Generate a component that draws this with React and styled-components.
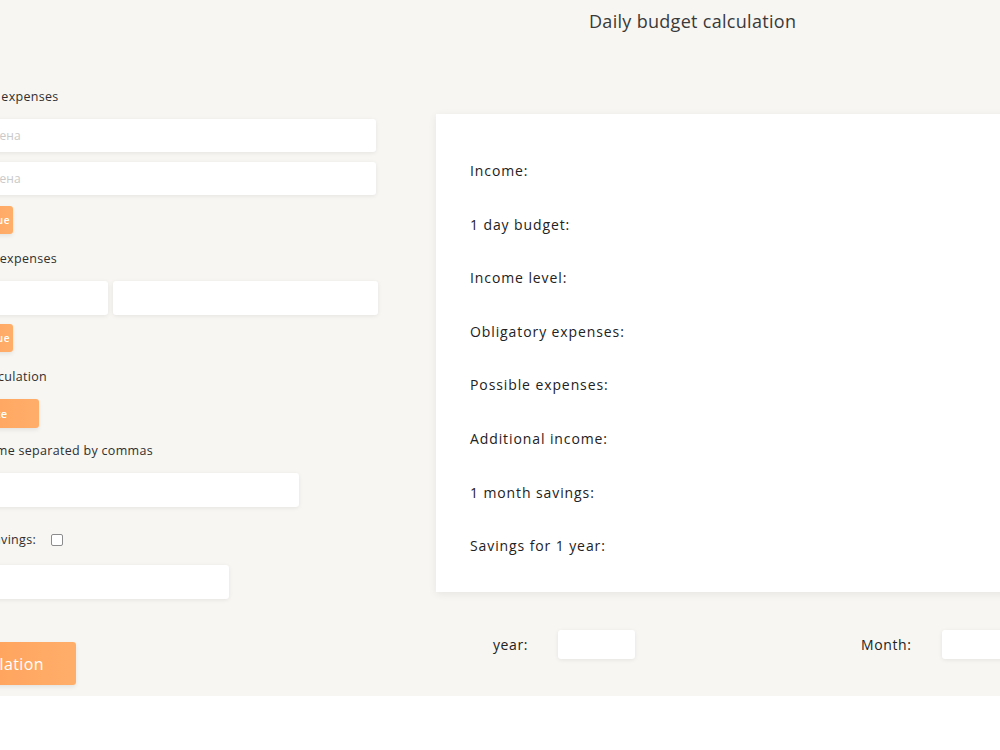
import React from "react";
import styled, { createGlobalStyle } from "styled-components";

const GlobalStyle = createGlobalStyle`
   html, body {
      margin: 0;
      padding: 0;
      background: #ffffff;
      overflow-x: hidden;
   }
   body {
      font-family: "Open Sans", "Liberation Sans", sans-serif;
      color: #333;
   }
`;

const Page = styled.div`
   background: #f7f6f3;
   width: 1180px;
   margin-left: -66px;
   padding: 9px 0 11px;
`;

const Header = styled.h1`
   margin: 0 0 56px;
   padding-left: 655px;
   font-size: 18px;
   font-weight: 400;
   line-height: 24px;
   color: #3a3a3a;
   letter-spacing: 0.3px;
`;

const Main = styled.div`
   display: flex;
   align-items: flex-start;
   gap: 58px;
`;

const LeftColumn = styled.div`
   width: 444px;
   display: flex;
   flex-direction: column;
`;

const Label = styled.div`
   font-size: 12.5px;
   line-height: 16px;
   color: #2f2f2f;
   letter-spacing: 0.3px;
   margin-top: ${(p) => p.$top || 0}px;
   margin-bottom: ${(p) => p.$bottom || 14}px;
   display: flex;
   align-items: center;
`;

const Input = styled.input`
   box-sizing: border-box;
   width: ${(p) => p.$width || 442}px;
   height: ${(p) => p.$height || 33}px;
   border: none;
   border-radius: 3px;
   background: #fff;
   box-shadow: 0 1px 4px rgba(0, 0, 0, 0.08);
   padding: 0 12px 0 ${(p) => p.$indent || 17}px;
   font-family: inherit;
   font-size: 12px;
   color: #333;
   outline: none;
   &::placeholder {
      color: #c9c9c9;
   }
`;

const Stack = styled.div`
   display: flex;
   flex-direction: column;
   gap: 10px;
`;

const Pair = styled.div`
   display: flex;
   gap: 5px;
`;

const OrangeButton = styled.button`
   box-sizing: border-box;
   border: none;
   border-radius: 3px;
   background: linear-gradient(90deg, #ff9d57, #ffae6a);
   color: #fff;
   font-family: inherit;
   box-shadow: 0 2px 4px rgba(0, 0, 0, 0.08);
   cursor: pointer;
   align-self: flex-start;
`;

const SmallButton = styled(OrangeButton)`
   width: 79px;
   height: 28px;
   margin-top: ${(p) => p.$top || 11}px;
   padding: 0 3px 0 0;
   font-size: 10px;
   font-weight: 600;
   text-align: right;
   letter-spacing: 0.5px;
`;

const MidButton = styled(OrangeButton)`
   height: 29px;
   padding: 0 32px 0 24px;
   font-size: 11px;
   font-weight: 600;
`;

const BigButton = styled(OrangeButton)`
   height: 43px;
   margin-top: 43px;
   padding: 0 32px 0 23px;
   font-size: 16px;
   letter-spacing: 0.4px;
`;

const Checkbox = styled.span`
   display: inline-block;
   width: 10px;
   height: 10px;
   border: 1px solid #8c8c8c;
   border-radius: 2px;
   background: #fff;
   margin-left: 15px;
`;

const RightColumn = styled.div`
   display: flex;
   flex-direction: column;
   padding-top: 25px;
`;

const Card = styled.div`
   box-sizing: border-box;
   width: 640px;
   height: 478px;
   background: #fff;
   box-shadow: 0 2px 8px rgba(0, 0, 0, 0.07);
   padding: 47px 34px 0;
   display: grid;
   grid-template-columns: 240px 1fr;
   grid-auto-rows: 20px;
   row-gap: 33.6px;
`;

const ResultLabel = styled.div`
   font-size: 14px;
   line-height: 20px;
   color: #222;
   letter-spacing: 0.9px;
`;

const ResultValue = styled.div`
   font-size: 14px;
   line-height: 20px;
   color: #222;
`;

const PeriodRow = styled.div`
   display: flex;
   align-items: center;
   margin-top: 38px;
   padding-left: 57px;
`;

const PeriodLabel = styled.span`
   font-size: 14px;
   color: #222;
   letter-spacing: 0.6px;
   margin-right: ${(p) => p.$gap}px;
   margin-left: ${(p) => p.$left || 0}px;
`;

const PeriodInput = styled(Input)`
   width: 77px;
   height: 29px;
`;

const results = [
   "Income:",
   "1 day budget:",
   "Income level:",
   "Obligatory expenses:",
   "Possible expenses:",
   "Additional income:",
   "1 month savings:",
   "Savings for 1 year:",
];

export default function App() {
   return (
      <>
         <GlobalStyle />
         <Page>
            <Header>Daily budget calculation</Header>
            <Main>
               <LeftColumn>
                  <Label>Obligatory expenses</Label>
                  <Stack>
                     <Input $indent={5} placeholder="Статья и цена" />
                     <Input $indent={5} placeholder="Статья и цена" />
                  </Stack>
                  <SmallButton>Add value</SmallButton>

                  <Label $top={17}>Additional expenses</Label>
                  <Pair>
                     <Input $width={174} $height={34} />
                     <Input $width={265} $height={34} />
                  </Pair>
                  <SmallButton $top={9}>Add value</SmallButton>

                  <Label $top={17}>Budget calculation</Label>
                  <MidButton>Calculate</MidButton>

                  <Label $top={15}>Enter income separated by commas</Label>
                  <Input $width={365} $height={34} />

                  <Label $top={25} $bottom={17}>
                     Monthly savings:
                     <Checkbox />
                  </Label>
                  <Input $width={295} $height={34} />

                  <BigButton>Calculation</BigButton>
               </LeftColumn>

               <RightColumn>
                  <Card>
                     {results.map((r) => (
                        <React.Fragment key={r}>
                           <ResultLabel>{r}</ResultLabel>
                           <ResultValue />
                        </React.Fragment>
                     ))}
                  </Card>
                  <PeriodRow>
                     <PeriodLabel $gap={30}>year:</PeriodLabel>
                     <PeriodInput />
                     <PeriodLabel $left={226} $gap={30}>
                        Month:
                     </PeriodLabel>
                     <PeriodInput />
                  </PeriodRow>
               </RightColumn>
            </Main>
         </Page>
      </>
   );
}
